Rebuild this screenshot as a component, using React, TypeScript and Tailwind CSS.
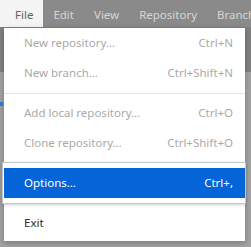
const MENUS = ["Edit", "View", "Repository", "Branch"];

type Item =
  | { kind: "item"; label: string; shortcut?: string; disabled?: boolean; active?: boolean }
  | { kind: "sep" };

const ITEMS: Item[] = [
  { kind: "item", label: "New repository…", shortcut: "Ctrl+N", disabled: true },
  { kind: "item", label: "New branch…", shortcut: "Ctrl+Shift+N", disabled: true },
  { kind: "sep" },
  { kind: "item", label: "Add local repository…", shortcut: "Ctrl+O", disabled: true },
  { kind: "item", label: "Clone repository…", shortcut: "Ctrl+Shift+O", disabled: true },
  { kind: "sep" },
  { kind: "item", label: "Options…", shortcut: "Ctrl+,", active: true },
  { kind: "sep" },
  { kind: "item", label: "Exit" },
];

const MenuRow = ({ item }: { item: Extract<Item, { kind: "item" }> }) => {
  if (item.active) {
    return (
      <div className="relative h-[30px]">
        <div className="absolute -top-[6px] -bottom-[6px] -left-[2px] -right-px border border-[#c6c6c6] bg-white shadow-[0_1px_3px_rgba(0,0,0,0.18)]" />
        <div className="relative flex h-full items-center justify-between bg-[#0564d8] pl-[20px] pr-[12px] text-white">
          <span>{item.label}</span>
          <span>{item.shortcut}</span>
        </div>
      </div>
    );
  }

  return (
    <div
      className={`flex h-[30px] items-center justify-between pl-[20px] pr-[12px] ${
        item.disabled ? "text-[#a9a9a9]" : "text-[#2b2b2b]"
      }`}
    >
      <span>{item.label}</span>
      {item.shortcut && <span>{item.shortcut}</span>}
    </div>
  );
};

const App = () => {
  return (
    <div className="relative h-[247px] w-[251px] overflow-hidden bg-[#a2a2a2] font-['Noto_Sans',sans-serif] text-[11.5px]">
      <div className="flex h-[27px] bg-[#8a8a8a]">
        <div className="flex items-center bg-[#f4f4f4] pl-[15px] pr-[10px] pt-[2px] text-[#5e6068]">File</div>
        {MENUS.map((m) => (
          <div key={m} className="flex items-center whitespace-nowrap px-[10px] pt-[2px] text-[#d6d6d6]">
            {m}
          </div>
        ))}
      </div>
      <div className="h-[45px] bg-[#808080]" />
      <div className="mt-[30px] h-[4px] w-[3px] bg-[#2f7fd6]" />

      <div className="absolute left-[4px] top-[28px] w-[241px] bg-white pb-[3px] shadow-[0_2px_6px_rgba(0,0,0,0.25)]">
        {ITEMS.map((item, i) =>
          item.kind === "sep" ? (
            <div key={i} className="flex h-[10px] items-center">
              <div className="h-px w-full bg-[#e4e4e4]" />
            </div>
          ) : (
            <MenuRow key={i} item={item} />
          )
        )}
      </div>
    </div>
  );
};

export default App;
